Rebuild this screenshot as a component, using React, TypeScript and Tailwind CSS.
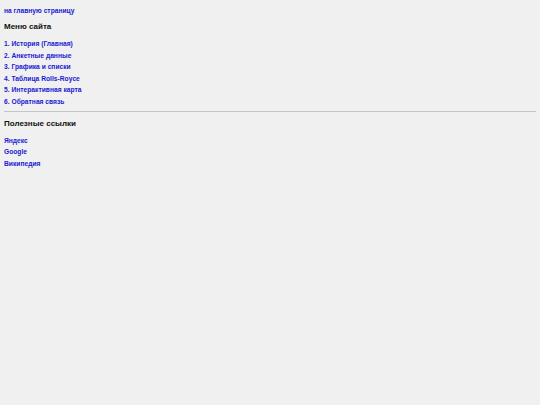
const menu = [
  '1. История (Главная)',
  '2. Анкетные данные',
  '3. Графика и списки',
  '4. Таблица Rolls-Royce',
  '5. Интерактивная карта',
  '6. Обратная связь',
];

const links = ['Яндекс', 'Google', 'Википедия'];

export default function App() {
  return (
    <div className="min-h-[405px] bg-[#f0f0f0] px-[4px] pt-[5px] font-['Liberation_Sans',Arial,sans-serif]">
      <a href="#" className="block text-[6.7px] font-bold leading-[12px] text-[#1a1ad2]">
        на главную страницу
      </a>
      <h3 className="mt-[4px] text-[8px] font-bold leading-[12px] text-[#111]">Меню сайта</h3>
      <ul className="mt-[5px]">
        {menu.map((item) => (
          <li key={item}>
            <a href="#" className="block text-[6.7px] font-bold leading-[11.6px] text-[#1a1ad2]">
              {item}
            </a>
          </li>
        ))}
      </ul>
      <hr className="mt-[3px] border-t border-[#c4c4c4]" />
      <h3 className="mt-[6px] text-[8px] font-bold leading-[12px] text-[#111]">Полезные ссылки</h3>
      <ul className="mt-[5px]">
        {links.map((item) => (
          <li key={item}>
            <a href="#" className="block text-[6.7px] font-bold leading-[11.6px] text-[#1a1ad2]">
              {item}
            </a>
          </li>
        ))}
      </ul>
    </div>
  );
}
